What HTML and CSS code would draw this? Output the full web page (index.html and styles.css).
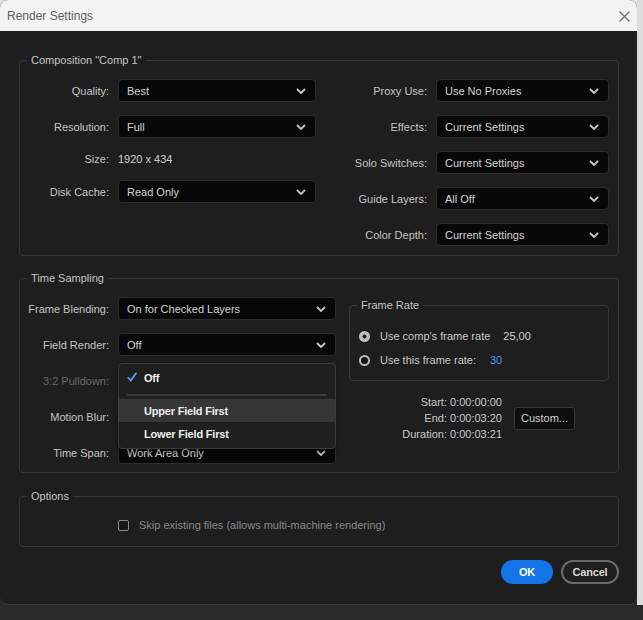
FILE: index.html
```html
<!DOCTYPE html>
<html>
<head>
<meta charset="utf-8">
<link rel="stylesheet" href="styles.css">
</head>
<body>
<div class="screen">
  <div class="dialog">
    <div class="titlebar">
      <span class="title">Render Settings</span>
      <svg class="close" width="11" height="11" viewBox="0 0 11 11"><path d="M0.5 0.5 L10.5 10.5 M10.5 0.5 L0.5 10.5" stroke="#6a6a6a" stroke-width="1.1" fill="none"/></svg>
    </div>
    <div class="content">
      <fieldset class="group comp">
        <legend>Composition "Comp 1"</legend>
        <div class="cols">
          <div class="grid grid-l">
            <div class="lbl">Quality:</div>
            <div class="select"><span>Best</span><svg class="chev" width="10" height="6" viewBox="0 0 10 6"><path d="M1 1 L5 5 L9 1" /></svg></div>
            <div class="lbl">Resolution:</div>
            <div class="select"><span>Full</span><svg class="chev" width="10" height="6" viewBox="0 0 10 6"><path d="M1 1 L5 5 L9 1" /></svg></div>
            <div class="lbl txtrow">Size:</div>
            <div class="val txtrow">1920 x 434</div>
            <div class="lbl">Disk Cache:</div>
            <div class="select"><span>Read Only</span><svg class="chev" width="10" height="6" viewBox="0 0 10 6"><path d="M1 1 L5 5 L9 1" /></svg></div>
          </div>
          <div class="grid grid-r">
            <div class="lbl">Proxy Use:</div>
            <div class="select"><span>Use No Proxies</span><svg class="chev" width="10" height="6" viewBox="0 0 10 6"><path d="M1 1 L5 5 L9 1" /></svg></div>
            <div class="lbl">Effects:</div>
            <div class="select"><span>Current Settings</span><svg class="chev" width="10" height="6" viewBox="0 0 10 6"><path d="M1 1 L5 5 L9 1" /></svg></div>
            <div class="lbl">Solo Switches:</div>
            <div class="select"><span>Current Settings</span><svg class="chev" width="10" height="6" viewBox="0 0 10 6"><path d="M1 1 L5 5 L9 1" /></svg></div>
            <div class="lbl">Guide Layers:</div>
            <div class="select"><span>All Off</span><svg class="chev" width="10" height="6" viewBox="0 0 10 6"><path d="M1 1 L5 5 L9 1" /></svg></div>
            <div class="lbl">Color Depth:</div>
            <div class="select"><span>Current Settings</span><svg class="chev" width="10" height="6" viewBox="0 0 10 6"><path d="M1 1 L5 5 L9 1" /></svg></div>
          </div>
        </div>
      </fieldset>

      <fieldset class="group ts">
        <legend>Time Sampling</legend>
        <div class="ts-cols">
          <div class="grid grid-ts">
            <div class="lbl">Frame Blending:</div>
            <div class="select"><span>On for Checked Layers</span><svg class="chev" width="10" height="6" viewBox="0 0 10 6"><path d="M1 1 L5 5 L9 1" /></svg></div>
            <div class="lbl">Field Render:</div>
            <div class="field-wrap">
              <div class="select"><span>Off</span><svg class="chev" width="10" height="6" viewBox="0 0 10 6"><path d="M1 1 L5 5 L9 1" /></svg></div>
              <div class="menu">
                <div class="menu-item"><svg class="check" width="10" height="10" viewBox="0 0 10 10"><path d="M0.8 5.2 L3.8 8.6 L9.4 0.8"/></svg>Off</div>
                <div class="sep"></div>
                <div class="menu-item hl">Upper Field First</div>
                <div class="menu-item">Lower Field First</div>
              </div>
            </div>
            <div class="lbl dim">3:2 Pulldown:</div>
            <div class="select disabled"></div>
            <div class="lbl">Motion Blur:</div>
            <div class="select"></div>
            <div class="lbl">Time Span:</div>
            <div class="select"><span>Work Area Only</span><svg class="chev" width="10" height="6" viewBox="0 0 10 6"><path d="M1 1 L5 5 L9 1" /></svg></div>
          </div>
          <div class="ts-right">
            <fieldset class="group fr">
              <legend>Frame Rate</legend>
              <div class="radios">
                <div class="radio-row"><span class="radio on"></span><span>Use comp's frame rate</span><span class="fr-val">25,00</span></div>
                <div class="radio-row"><span class="radio"></span><span>Use this frame rate:</span><span class="fr-val2">30</span></div>
              </div>
            </fieldset>
            <div class="times">
              <div class="times-text">
                <div>Start: 0:00:00:00</div>
                <div>End: 0:00:03:20</div>
                <div>Duration: 0:00:03:21</div>
              </div>
              <div class="custom">Custom...</div>
            </div>
          </div>
        </div>
      </fieldset>

      <fieldset class="group opts">
        <legend>Options</legend>
        <div class="opt-row"><span class="checkbox"></span><span class="opt-text">Skip existing files (allows multi-machine rendering)</span></div>
      </fieldset>

      <div class="actions">
        <div class="btn ok">OK</div>
        <div class="btn cancel">Cancel</div>
      </div>
    </div>
  </div>
  <div class="strip"></div>
</div>
</body>
</html>
```

FILE: styles.css
```css
* { box-sizing: border-box; }
html, body { margin: 0; padding: 0; }
body {
  width: 643px;
  height: 620px;
  overflow: hidden;
  background: #2a2a2a;
  font-family: "Liberation Sans", Arial, sans-serif;
  font-size: 11px;
  color: #c4c4c4;
}
.screen {
  display: flex;
  height: 605px;
  background: linear-gradient(#e2e2e2 0 50%, #2a2a2a 50%);
}
.dialog {
  width: 637px;
  height: 605px;
  border-radius: 8px;
  overflow: hidden;
  background: #1e1e1e;
  display: flex;
  flex-direction: column;
  border-bottom: 1px solid #3a3a3a;
}
.strip {
  flex: 1;
  background: #dcdcdc;
}
.titlebar {
  height: 31px;
  flex: none;
  background: #f3f3f3;
  display: flex;
  align-items: center;
  justify-content: space-between;
  padding: 0 7px 0 7px;
  font-size: 12px;
  color: #5e5e5e;
}
.close { display: block; margin-top: 1px; }
.content {
  padding: 22px 18px 0 19px;
}
fieldset.group {
  margin: 0;
  border: 1px solid #363636;
  border-radius: 4px;
  padding: 12px 9px 9px 8px;
  min-width: 0;
}
legend {
  padding: 0 4px;
  margin-left: -1px;
  line-height: 14px;
  font-size: 11px;
  color: #c4c4c4;
}
.cols { display: flex; gap: 24px; }
.grid {
  display: grid;
  column-gap: 9px;
  row-gap: 13px;
  align-content: start;
}
.grid-l { grid-template-columns: 81px 198px; }
.grid-r { grid-template-columns: 87px 173px; }
.grid-ts { grid-template-columns: 81px 218px; }
.lbl {
  text-align: right;
  align-self: center;
  white-space: nowrap;
  color: #c4c4c4;
}
.lbl.dim { color: #696969; }
.txtrow { line-height: 16px; }
.val { color: #cfcfcf; }
.select {
  height: 23px;
  background: #080808;
  border: 1px solid #2c2c2c;
  border-radius: 4px;
  display: flex;
  align-items: center;
  justify-content: space-between;
  padding: 0 9px 0 8px;
  color: #d2d2d2;
  white-space: nowrap;
}
.select.disabled { color: #6a6a6a; }
.chev { display: block; }
.chev path { stroke: #c6c6c6; stroke-width: 1.8; fill: none; }

fieldset.ts { margin-top: 15px; padding-top: 12px; padding-bottom: 8px; }
.ts-cols { display: flex; gap: 13px; }
.ts-right { width: 260px; padding-top: 1px; }
.field-wrap { position: relative; }
.menu {
  position: absolute;
  left: 0;
  right: 0;
  top: calc(100% + 7px);
  background: #1f1f1f;
  border: 1px solid #3b3b3b;
  border-radius: 4px;
  padding: 2px 0 3px;
  z-index: 5;
  box-shadow: 0 2px 6px rgba(0, 0, 0, 0.45);
}
.menu-item {
  position: relative;
  height: 23px;
  display: flex;
  align-items: center;
  padding-left: 25px;
  font-weight: bold;
  color: #ededed;
  letter-spacing: -0.2px;
}
.menu-item.hl { background: #363636; }
.check {
  position: absolute;
  left: 8px;
  top: 6px;
}
.check path { stroke: #5a9ef0; stroke-width: 1.7; fill: none; }
.sep {
  height: 2px;
  background: #393939;
  margin: 5px 8px 3px;
}

fieldset.fr {
  padding: 17px 10px 13px 9px;
}
fieldset.fr legend { margin-left: -2px; }
.radios { display: flex; flex-direction: column; gap: 10px; }
.radio-row {
  display: flex;
  align-items: center;
  height: 14px;
  white-space: nowrap;
  color: #c8c8c8;
}
.radio {
  width: 11px;
  height: 11px;
  border-radius: 50%;
  margin-right: 10px;
  flex: none;
  border: 2px solid #bdbdbd;
  background: #121212;
}
.radio.on {
  border: none;
  background: radial-gradient(circle, #1e1e1e 0 1.7px, #bdbdbd 2.3px);
}
.fr-val { margin-left: 13px; color: #cfcfcf; }
.fr-val2 { margin-left: 14px; color: #4f9cf2; }
.times {
  display: flex;
  align-items: center;
  margin-top: 13px;
}
.times-text {
  width: 153px;
  text-align: right;
  line-height: 16px;
  color: #c8c8c8;
  white-space: nowrap;
}
.custom {
  margin-left: 12px;
  width: 61px;
  height: 23px;
  background: #0e0e0e;
  border: 1px solid #363636;
  border-radius: 3px;
  display: flex;
  align-items: center;
  justify-content: center;
  color: #d0d0d0;
}

fieldset.opts { margin-top: 16px; padding-top: 17px; padding-bottom: 15px; }
.opt-row {
  display: flex;
  align-items: center;
  height: 11px;
  margin-left: 90px;
}
.checkbox {
  width: 11px;
  height: 11px;
  border: 1.5px solid #8a8a8a;
  border-radius: 2px;
  background: #181818;
  flex: none;
}
.opt-text {
  margin-left: 10px;
  color: #898989;
  line-height: 11px;
  white-space: nowrap;
}

.actions {
  display: flex;
  justify-content: flex-end;
  gap: 8px;
  margin-top: 13px;
}
.btn {
  height: 24px;
  border-radius: 12px;
  font-weight: bold;
  font-size: 11px;
  display: flex;
  align-items: center;
  justify-content: center;
  letter-spacing: -0.2px;
}
.ok {
  width: 52px;
  background: #1473e6;
  color: #ffffff;
}
.cancel {
  width: 58px;
  border: 2px solid #6a6a6a;
  color: #d8d8d8;
}
```
